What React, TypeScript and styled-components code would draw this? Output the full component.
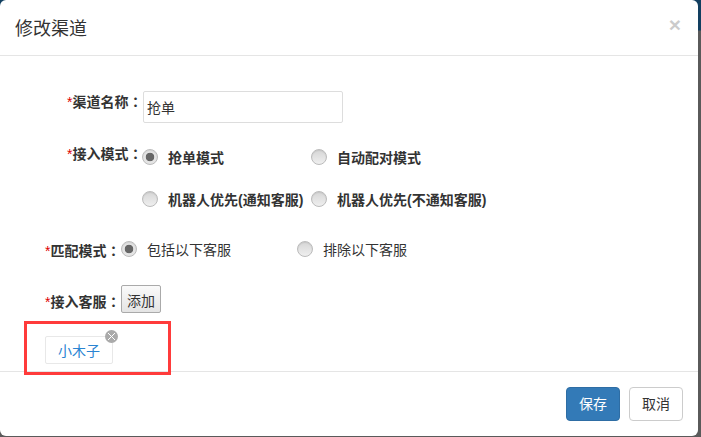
import React from 'react';
import styled, { createGlobalStyle } from 'styled-components';

const Global = createGlobalStyle`
html, body {
    margin: 0;
    padding: 0;
    background: linear-gradient(#123f60 0, #123f60 30px, #5a5a5a 31px);
}
body {
    width: 701px;
    height: 437px;
    overflow: hidden;
    font-family: "Liberation Sans", "Noto Sans CJK SC", sans-serif;
    font-size: 14px;
    line-height: 20px;
    color: #333;
}
* { box-sizing: border-box; }
`

const Modal = styled.div`
width: 698px;
height: 436px;
background: #fff;
border-radius: 6px;
display: flex;
flex-direction: column;
`

const Header = styled.header`
height: 56px;
flex: none;
padding: 0 15px;
border-bottom: 1px solid #e5e5e5;
display: flex;
align-items: center;
justify-content: space-between;
`

const Title = styled.h4`
margin: 3px 0 0;
font-size: 18px;
font-weight: 400;
line-height: 25px;
`

const Close = styled.span`
font-size: 21px;
font-weight: 700;
color: #000;
opacity: .2;
margin: -6px 2px 0 0;
`

const Body = styled.div`
flex: 1;
padding: 35px 0 0 45px;
position: relative;
`

const Row = styled.div<{ $indent?: number; $height: number }>`
display: flex;
align-items: flex-start;
height: ${p => p.$height}px;
padding-left: ${p => p.$indent || 0}px;
`

const Label = styled.label<{ $top?: number; $width?: number }>`
font-weight: 700;
white-space: nowrap;
width: ${p => p.$width || 76}px;
flex: none;
margin-top: ${p => p.$top || 0}px;
`

const Star = styled.span`
color: #d00;
font-weight: 400;
`

const Colon = styled.span`
font-family: "Noto Sans CJK TC", sans-serif;
`

const TextInput = styled.input`
width: 200px;
height: 32px;
border: 1px solid #ddd;
border-radius: 2px;
padding: 0 3px;
font: inherit;
color: #333;
outline: none;
`

const Option = styled.label<{ $width: number; $bold?: boolean; $top?: number }>`
display: flex;
align-items: center;
width: ${p => p.$width}px;
flex: none;
margin-top: ${p => p.$top || 0}px;
font-weight: ${p => (p.$bold ? 700 : 400)};
white-space: nowrap;
`

const Dot = styled.span<{ $on?: boolean }>`
width: 16px;
height: 16px;
flex: none;
margin: -2px 10px 0 0;
border-radius: 50%;
background: ${p => p.$on
    ? 'radial-gradient(circle, #666 0 4px, #e4e4e4 4.6px)'
    : 'linear-gradient(#d6d6d6, #efefef)'};
border: 1px solid #bbb;
box-shadow: inset 0 1px 1px rgba(0, 0, 0, .08);
`

const AddButton = styled.button`
width: 40px;
height: 28px;
padding: 3px 0 0;
font: inherit;
color: #333;
background: linear-gradient(#fafafa, #e4e4e4);
border: 1px solid #aaa;
border-radius: 2px;
`

const Tag = styled.div`
position: relative;
width: 68px;
height: 28px;
border: 1px solid #e8e8e8;
border-radius: 2px;
color: #2a84d2;
text-align: center;
line-height: 29px;
`

const TagClose = styled.span`
position: absolute;
top: -7px;
right: -6px;
width: 13px;
height: 13px;
border-radius: 50%;
background: #aaa;
display: flex;
align-items: center;
justify-content: center;
`

const Highlight = styled.div`
position: absolute;
left: 24px;
top: 265px;
width: 147px;
height: 54px;
border: 3px solid #ff3b3b;
pointer-events: none;
`

const Footer = styled.footer`
height: 65px;
flex: none;
border-top: 1px solid #e5e5e5;
padding: 15px 15px 0 0;
display: flex;
justify-content: flex-end;
gap: 9px;
`

const Btn = styled.button<{ $primary?: boolean }>`
width: 54px;
height: 34px;
padding: 0;
font: inherit;
border-radius: 4px;
border: 1px solid ${p => (p.$primary ? '#2e6da4' : '#ccc')};
background: ${p => (p.$primary ? '#337ab7' : '#fff')};
color: ${p => (p.$primary ? '#fff' : '#333')};
`

export default function App() {
    return (
        <Modal>
            <Global />
            <Header>
                <Title>修改渠道</Title>
                <Close>×</Close>
            </Header>
            <Body>
                <Row $indent={22} $height={52}>
                    <Label><Star>*</Star>渠道名称<Colon>：</Colon></Label>
                    <TextInput defaultValue="抢单" />
                </Row>
                <Row $indent={22} $height={47}>
                    <Label $width={75}><Star>*</Star>接入模式<Colon>：</Colon></Label>
                    <Option $width={169} $bold $top={5}><Dot $on />抢单模式</Option>
                    <Option $width={190} $bold $top={5}><Dot />自动配对模式</Option>
                </Row>
                <Row $indent={97} $height={50}>
                    <Option $width={169} $bold><Dot />机器人优先(通知客服)</Option>
                    <Option $width={190} $bold><Dot />机器人优先(不通知客服)</Option>
                </Row>
                <Row $height={45}>
                    <Label><Star>*</Star>匹配模式<Colon>：</Colon></Label>
                    <Option $width={176}><Dot $on />包括以下客服</Option>
                    <Option $width={150}><Dot />排除以下客服</Option>
                </Row>
                <Row $height={51}>
                    <Label $top={6}><Star>*</Star>接入客服<Colon>：</Colon></Label>
                    <AddButton>添加</AddButton>
                </Row>
                <Tag>
                    小木子
                    <TagClose>
                        <svg width="9" height="9" viewBox="0 0 9 9">
                            <path d="M1 1l7 7M8 1l-7 7" stroke="#fff" strokeWidth="1" />
                        </svg>
                    </TagClose>
                </Tag>
                <Highlight />
            </Body>
            <Footer>
                <Btn $primary>保存</Btn>
                <Btn>取消</Btn>
            </Footer>
        </Modal>
    );
}
